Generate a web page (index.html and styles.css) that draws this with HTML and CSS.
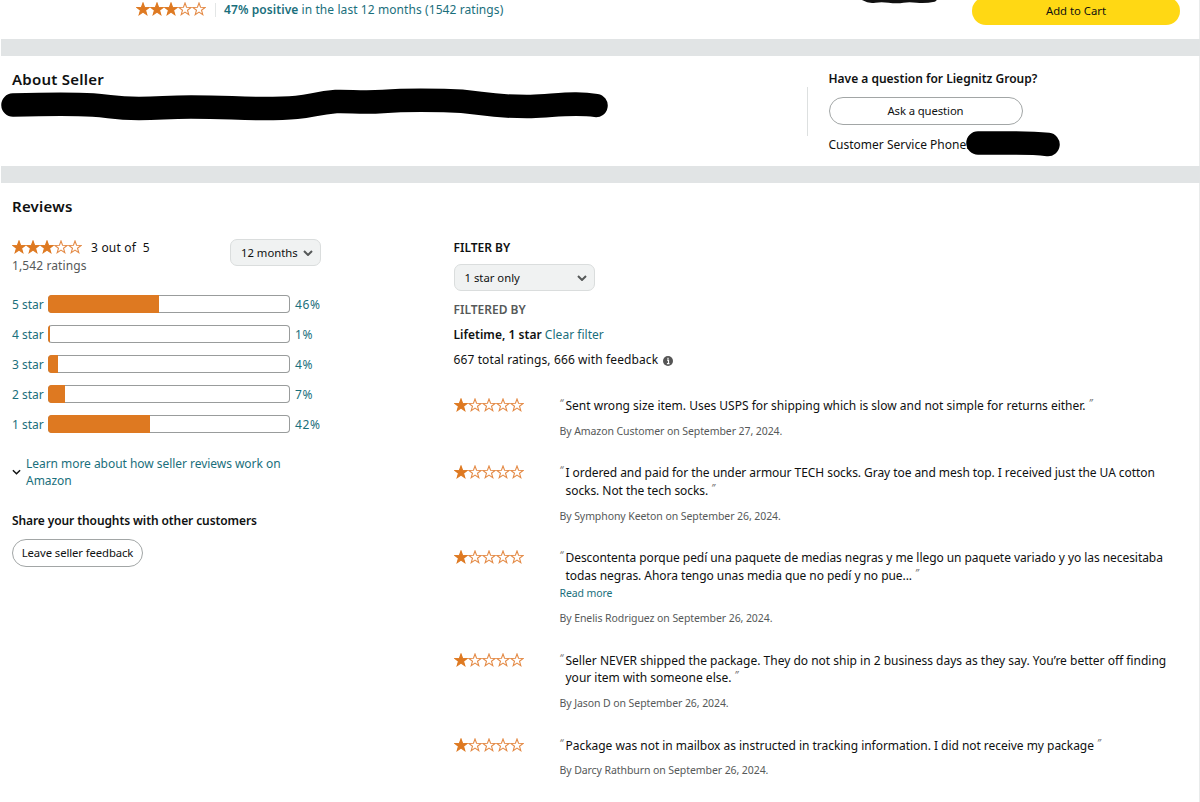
FILE: index.html
```html
<!DOCTYPE html>
<html lang="en">
<head>
    <meta charset="utf-8">
    <title>Seller Profile</title>
    <link rel="stylesheet" href="styles.css">
</head>
<body>
    <!-- shared star and arrow shapes -->
    <svg class="sprite" aria-hidden="true">
        <symbol id="star" viewBox="0 0 14 14">
            <path d="M7 1l1.55 4.25 4.55.15-3.6 2.8 1.3 4.4L7 10.05 3.2 12.6l1.3-4.4L.9 5.4l4.55-.15z"/>
        </symbol>
        <symbol id="arrow" viewBox="0 0 10 6">
            <path d="M1 1l4 4 4-4"/>
        </symbol>
    </svg>

    <div class="page">
        <section class="summary">
            <div class="stars">
                <svg class="full"><use href="#star"/></svg><svg class="full"><use href="#star"/></svg><svg class="full"><use href="#star"/></svg><svg><use href="#star"/></svg><svg><use href="#star"/></svg>
            </div>
            <a class="positive" href="#"><b>47% positive</b> in the last 12 months (1542 ratings)</a>
            <svg class="scribble-top" viewBox="0 0 80 4">
                <path d="M5 -2Q10 1 16 0T30 0T44 0T58 0T75 -1" fill="none" stroke="#111" stroke-width="5.5" stroke-linecap="round"/>
            </svg>
            <button class="cart">Add to Cart</button>
        </section>

        <section class="about">
            <div class="about-text">
                <h2>About Seller</h2>
                <svg class="scribble" viewBox="0 0 610 36">
                    <path d="M12 18C50 17 75 17 92 18C110 19 112 21.500 138 21.500C160 21.500 165 20 190 20C225 20 235 21.500 262 21.500C312 21.500 306 17 335 14.500C350 14 360 16 382 14.500C400 13 425 13 443 13.500C482 14 480 20 530 19.500C560 18 575 15.500 595 18.500" fill="none" stroke="#000" stroke-width="23.5" stroke-linecap="round"/>
                </svg>
            </div>
            <div class="question">
                <h3>Have a question for Liegnitz Group?</h3>
                <button class="pill ask">Ask a question</button>
                <p class="phone">Customer Service Phone:</p>
                <svg class="scribble-phone" viewBox="0 0 96 28">
                    <path d="M13 13H50Q70 13 83 14.5" fill="none" stroke="#000" stroke-width="23.5" stroke-linecap="round"/>
                </svg>
            </div>
        </section>

        <section class="reviews">
            <h2>Reviews</h2>
            <div class="columns">
                <div class="ratings">
                    <div class="overall">
                        <div>
                            <div class="score">
                                <div class="stars">
                                    <svg class="full"><use href="#star"/></svg><svg class="full"><use href="#star"/></svg><svg class="full"><use href="#star"/></svg><svg><use href="#star"/></svg><svg><use href="#star"/></svg>
                                </div>
                                <span>3 out of&nbsp; 5</span>
                            </div>
                            <div class="count">1,542 ratings</div>
                        </div>
                        <button class="dropdown months">12 months <svg class="arrow"><use href="#arrow"/></svg></button>
                    </div>

                    <div class="bars">
                        <div class="bar-row"><a href="#">5 star</a><div class="bar"><div class="fill" style="width: 46%"></div></div><a href="#">46%</a></div>
                        <div class="bar-row"><a href="#">4 star</a><div class="bar"><div class="fill" style="width: 1%"></div></div><a href="#">1%</a></div>
                        <div class="bar-row"><a href="#">3 star</a><div class="bar"><div class="fill" style="width: 4%"></div></div><a href="#">4%</a></div>
                        <div class="bar-row"><a href="#">2 star</a><div class="bar"><div class="fill" style="width: 7%"></div></div><a href="#">7%</a></div>
                        <div class="bar-row"><a href="#">1 star</a><div class="bar"><div class="fill" style="width: 42%"></div></div><a href="#">42%</a></div>
                    </div>

                    <div class="learn">
                        <svg class="arrow dark"><use href="#arrow"/></svg>
                        <a href="#">Learn more about how seller reviews work on<br>Amazon</a>
                    </div>
                    <h3>Share your thoughts with other customers</h3>
                    <button class="pill feedback">Leave seller feedback</button>
                </div>

                <div class="list">
                    <h4>FILTER BY</h4>
                    <button class="dropdown filter">1 star only <svg class="arrow"><use href="#arrow"/></svg></button>
                    <h4 class="grey">FILTERED BY</h4>
                    <p class="line"><b>Lifetime, 1 star</b> <a href="#">Clear filter</a></p>
                    <p class="line total">667 total ratings, 666 with feedback
                        <svg class="info" viewBox="0 0 10 10"><circle cx="5" cy="5" r="5" fill="#555"/><path d="M4 4.2h1.5v3.3M3.9 7.7h2.6M5 1.7v1.4" fill="none" stroke="#fff" stroke-width="1.2"/></svg>
                    </p>

                    <div class="review">
                        <div class="stars">
                            <svg class="full"><use href="#star"/></svg><svg><use href="#star"/></svg><svg><use href="#star"/></svg><svg><use href="#star"/></svg><svg><use href="#star"/></svg>
                        </div>
                        <div>
                            <p class="quote"><i>“</i>Sent wrong size item. Uses USPS for shipping which is slow and not simple for returns either. <i>”</i></p>
                            <p class="by">By Amazon Customer on September 27, 2024.</p>
                        </div>
                    </div>
                    <div class="review">
                        <div class="stars">
                            <svg class="full"><use href="#star"/></svg><svg><use href="#star"/></svg><svg><use href="#star"/></svg><svg><use href="#star"/></svg><svg><use href="#star"/></svg>
                        </div>
                        <div>
                            <p class="quote tight"><i>“</i>I ordered and paid for the under armour TECH socks. Gray toe and mesh top. I received just the UA cotton<br>socks. Not the tech socks. <i>”</i></p>
                            <p class="by">By Symphony Keeton on September 26, 2024.</p>
                        </div>
                    </div>
                    <div class="review">
                        <div class="stars">
                            <svg class="full"><use href="#star"/></svg><svg><use href="#star"/></svg><svg><use href="#star"/></svg><svg><use href="#star"/></svg><svg><use href="#star"/></svg>
                        </div>
                        <div>
                            <p class="quote tight"><i>“</i>Descontenta porque pedí una paquete de medias negras y me llego un paquete variado y yo las necesitaba<br>todas negras. Ahora tengo unas media que no pedí y no pue... <i>”</i></p>
                            <a class="more" href="#">Read more</a>
                            <p class="by">By Enelis Rodriguez on September 26, 2024.</p>
                        </div>
                    </div>
                    <div class="review">
                        <div class="stars">
                            <svg class="full"><use href="#star"/></svg><svg><use href="#star"/></svg><svg><use href="#star"/></svg><svg><use href="#star"/></svg><svg><use href="#star"/></svg>
                        </div>
                        <div>
                            <p class="quote"><i>“</i>Seller NEVER shipped the package. They do not ship in 2 business days as they say. You’re better off finding<br>your item with someone else. <i>”</i></p>
                            <p class="by">By Jason D on September 26, 2024.</p>
                        </div>
                    </div>
                    <div class="review">
                        <div class="stars">
                            <svg class="full"><use href="#star"/></svg><svg><use href="#star"/></svg><svg><use href="#star"/></svg><svg><use href="#star"/></svg><svg><use href="#star"/></svg>
                        </div>
                        <div>
                            <p class="quote snug"><i>“</i>Package was not in mailbox as instructed in tracking information. I did not receive my package <i>”</i></p>
                            <p class="by">By Darcy Rathburn on September 26, 2024.</p>
                        </div>
                    </div>
                </div>
            </div>
        </section>
    </div>
</body>
</html>
```
FILE: styles.css
```css
* {
    box-sizing: border-box;
}

body {
    margin: 0;
    height: 802px;
    overflow: hidden;
    background: #fff;
    color: #0f1111;
    font-family: "Noto Sans", "Open Sans", sans-serif;
    font-size: 12px;
    line-height: 17.7px;
}

h2, h3, h4, p {
    margin: 0;
}

h2 {
    font-size: 15px;
    line-height: 22px;
    font-weight: 600;
    letter-spacing: 0.25px;
}

h3 {
    font-size: 12px;
    line-height: 18px;
    font-weight: 600;
}

h4 {
    font-size: 12px;
    line-height: 18px;
    font-weight: 600;
}

b {
    font-weight: 600;
}

a {
    color: #1a6f7c;
    text-decoration: none;
}

button {
    font: inherit;
    font-size: 11.3px;
    color: inherit;
    padding: 0;
}

.sprite {
    position: absolute;
    width: 0;
    height: 0;
}

.page {
    height: 802px;
    margin-left: 1px;
    border-right: 1px solid #e9ebeb;
}

/* stars and arrows */
.stars {
    display: flex;
    width: 70px;
    height: 14px;
}

.stars svg {
    width: 14px;
    height: 14px;
    fill: #fff;
    stroke: #e48b47;
    stroke-width: 1.1;
}

.stars .full {
    fill: #de7921;
    stroke: #de7921;
}

.arrow {
    width: 10px;
    height: 6px;
    fill: none;
    stroke: #565959;
    stroke-width: 2;
}

.arrow.dark {
    stroke: #0f1111;
    stroke-width: 1.6;
}

/* top strip */
.summary {
    position: relative;
    display: flex;
    height: 39px;
    padding: 0 19px 0 135px;
}

.summary .stars {
    margin-top: 2px;
}

.positive {
    height: 14px;
    margin: 3px 0 0 9px;
    padding-left: 8px;
    border-left: 1px solid #e3e6e6;
    line-height: 14px;
    letter-spacing: 0.08px;
}

.scribble-top {
    position: absolute;
    left: 858px;
    top: 0;
    width: 80px;
    height: 4px;
}

.cart {
    width: 208px;
    height: 28px;
    margin: -3px 0 0 auto;
    border: 0;
    border-radius: 14px;
    background: #ffd814;
}

.pill {
    border: 1px solid #a2a6a6;
    border-radius: 14px;
    background: #fff;
}

/* about seller */
.about {
    position: relative;
    display: flex;
    height: 144px;
    margin-right: -1px;
    border-top: 17px solid #e1e4e5;
    border-bottom: 17px solid #e1e4e5;
}

.about-text {
    width: 806px;
    padding: 12px 0 0 11px;
}

.scribble {
    position: absolute;
    left: 0;
    top: 31px;
    width: 610px;
    height: 36px;
}

.question {
    position: relative;
    padding: 14px 0 0 21.5px;
}

.question::before {
    content: "";
    position: absolute;
    left: 0;
    top: 31px;
    height: 49px;
    border-left: 1px solid #dde0e0;
}

.ask {
    display: block;
    width: 194px;
    height: 28px;
    margin: 9px 0 11px;
    letter-spacing: -0.1px;
}

.scribble-phone {
    position: absolute;
    left: 158px;
    top: 74px;
    width: 96px;
    height: 28px;
}

/* reviews */
.reviews {
    padding: 12px 0 0 11px;
}

.columns {
    display: grid;
    grid-template-columns: 309px 1fr;
    column-gap: 132.5px;
    margin-top: 21px;
}

.overall {
    display: flex;
    justify-content: space-between;
    height: 38px;
}

.score {
    display: flex;
    align-items: center;
    gap: 9px;
    height: 19px;
    letter-spacing: 0.2px;
}

.score .stars {
    position: relative;
    top: -0.5px;
}

.count {
    letter-spacing: 0.1px;
}

.count, .grey, .by {
    color: #565959;
}

.dropdown {
    display: flex;
    align-items: center;
    justify-content: space-between;
    height: 27px;
    border: 1px solid #dadddd;
    border-radius: 7px;
    background: #f0f2f2;
}

.months {
    width: 91px;
    margin-top: 1px;
    padding: 0 7px 0 10px;
}

.bars {
    margin-top: 13px;
}

.bar-row {
    display: grid;
    grid-template-columns: 36px 242px 1fr;
    align-items: center;
    height: 30px;
}

.bar-row a {
    padding-top: 1px;
}

.bar-row a:last-child {
    padding-left: 5px;
    letter-spacing: 0.6px;
}

.bar {
    height: 18px;
    border-radius: 4px;
    box-shadow: inset 0 0 0 1px #999c9c;
    overflow: hidden;
}

.fill {
    height: 18px;
    background: #de7921;
}

.learn {
    display: flex;
    align-items: center;
    gap: 5px;
    margin-top: 15.5px;
    letter-spacing: -0.04px;
}

.learn .arrow {
    width: 9px;
}

.ratings h3 {
    margin: 22px 0 9px;
    letter-spacing: -0.1px;
}

.feedback {
    width: 131px;
    height: 28px;
    padding-bottom: 1px;
    letter-spacing: -0.1px;
}

.filter {
    width: 141px;
    margin: 8px 0 10px;
    padding: 0 7px 0 10px;
}

.list h4:first-child {
    position: relative;
    top: 1px;
}

.line {
    height: 25px;
    padding-top: 7px;
    letter-spacing: 0.03px;
}

.total {
    margin-bottom: 28px;
    letter-spacing: 0.11px;
}

.info {
    width: 10px;
    height: 10px;
    margin-left: 2px;
    vertical-align: -1.5px;
}

.review {
    display: grid;
    grid-template-columns: 106px 1fr;
    padding-bottom: 24px;
}

.review .stars {
    margin-top: 1px;
}

.quote {
    padding-left: 6px;
    white-space: nowrap;
}

.tight {
    letter-spacing: -0.06px;
}

.snug {
    letter-spacing: -0.035px;
}

.quote i {
    position: relative;
    top: -3px;
    font-size: 10px;
    line-height: 1px;
    color: #777;
}

.quote i:first-child {
    display: inline-block;
    width: 6px;
    margin-left: -6px;
}

.more {
    display: block;
    font-size: 10.5px;
    letter-spacing: -0.1px;
}

.by {
    margin-top: 8px;
    font-size: 10.5px;
    line-height: 17.5px;
    letter-spacing: -0.08px;
}
```
